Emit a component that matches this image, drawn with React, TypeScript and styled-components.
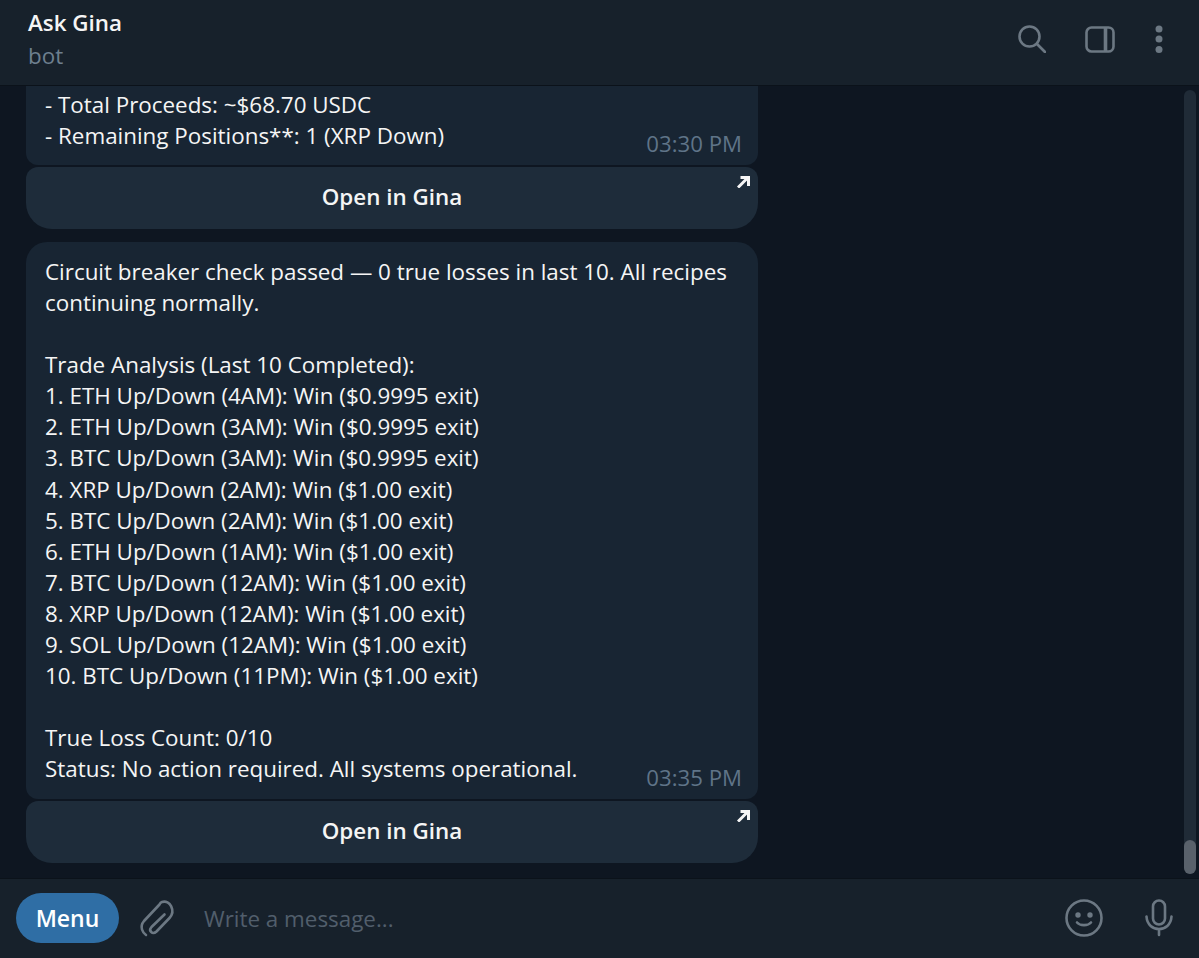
import styled, { createGlobalStyle } from 'styled-components';

const GlobalStyle = createGlobalStyle`
  html, body {
    margin: 0;
    padding: 0;
    height: 100%;
    background: #0e1621;
  }
  #root {
    height: 100%;
  }
`;

const Window = styled.div`
  width: 1199px;
  height: 958px;
  display: flex;
  flex-direction: column;
  background: #0e1621;
  font-family: "Open Sans", "Noto Sans", sans-serif;
  font-size: 22.4px;
  color: #f5f5f5;
  overflow: hidden;
`;

const Header = styled.header`
  flex: 0 0 86px;
  box-sizing: border-box;
  display: flex;
  align-items: center;
  justify-content: space-between;
  padding: 0 35px 0 28px;
  background: #17212b;
  border-bottom: 1px solid #0b121a;
`;

const TitleBlock = styled.div`
  display: flex;
  flex-direction: column;
  margin-top: -6px;
`;

const Title = styled.div`
  font-weight: 600;
  line-height: 32px;
  color: #f5f5f5;
`;

const Subtitle = styled.div`
  line-height: 34px;
  color: #6d7f8f;
`;

const HeaderIcons = styled.div`
  display: flex;
  align-items: center;
  gap: 39px;
  margin-top: -7px;
`;

const IconSvg = styled.svg`
  display: block;
  fill: none;
  stroke: #6c7883;
  stroke-width: 2.6;
  stroke-linecap: round;
  stroke-linejoin: round;
`;

const Feed = styled.main`
  flex: 1;
  position: relative;
  min-height: 0;
  display: flex;
  flex-direction: column;
  justify-content: flex-end;
  overflow: hidden;
  padding: 0 0 15px 26px;
`;

const Bubble = styled.div<{ $clipped?: boolean }>`
  position: relative;
  flex-shrink: 0;
  box-sizing: border-box;
  width: 732px;
  padding: ${p => (p.$clipped ? '4px 19px 14px' : '13.5px 19px 14.5px')};
  background: #182533;
  border-radius: ${p => (p.$clipped ? '0 0 12px 12px' : '21px 21px 12px 12px')};
  line-height: 31.1px;
`;

const Line = styled.div`
  width: fit-content;
  min-height: 31.1px;
`;

const Stamp = styled.span`
  position: absolute;
  right: 16px;
  bottom: 6px;
  font-size: 22.2px;
  line-height: 30px;
  color: #5f7488;
`;

const OpenButton = styled.div<{ $last?: boolean }>`
  position: relative;
  flex-shrink: 0;
  box-sizing: border-box;
  width: 732px;
  height: 62px;
  margin: 2px 0 ${p => (p.$last ? '0' : '13px')};
  padding-bottom: 4px;
  display: flex;
  align-items: center;
  justify-content: center;
  background: #1e2c3a;
  border-radius: 12px 12px 26px 26px;
  font-weight: 600;
  color: #f5f5f5;
`;

const Corner = styled.svg`
  position: absolute;
  top: 9px;
  right: 8px;
  fill: none;
  stroke: #f5f5f5;
  stroke-width: 3;
`;

const ScrollTrack = styled.div`
  position: absolute;
  top: 4px;
  right: 3px;
  bottom: 4px;
  width: 12px;
  border-radius: 6px;
  background: #202b37;
`;

const ScrollThumb = styled.div`
  position: absolute;
  right: 0;
  bottom: 0;
  width: 12px;
  height: 34px;
  border-radius: 6px;
  background: #59616b;
`;

const Composer = styled.footer`
  flex: 0 0 80px;
  box-sizing: border-box;
  display: flex;
  align-items: center;
  padding: 0 26px 1px 16px;
  background: #17212b;
  border-top: 1px solid #0b121a;
`;

const MenuButton = styled.div`
  width: 103px;
  height: 50px;
  display: flex;
  align-items: center;
  justify-content: center;
  border-radius: 25px;
  background: #2f6ea5;
  font-size: 23px;
  font-weight: 600;
  color: #ffffff;
`;

const Placeholder = styled.div`
  flex: 1;
  margin-left: 25px;
  color: #515e6b;
`;

const ComposerIcons = styled.div`
  display: flex;
  align-items: center;
  gap: 42px;
`;

const AttachWrap = styled.div`
  margin-left: 16px;
`;

const firstLines = [
  '- Total Proceeds: ~$68.70 USDC',
  '- Remaining Positions**: 1 (XRP Down)',
];

const secondLines = [
  'Circuit breaker check passed — 0 true losses in last 10. All recipes',
  'continuing normally.',
  '',
  'Trade Analysis (Last 10 Completed):',
  '1. ETH Up/Down (4AM): Win ($0.9995 exit)',
  '2. ETH Up/Down (3AM): Win ($0.9995 exit)',
  '3. BTC Up/Down (3AM): Win ($0.9995 exit)',
  '4. XRP Up/Down (2AM): Win ($1.00 exit)',
  '5. BTC Up/Down (2AM): Win ($1.00 exit)',
  '6. ETH Up/Down (1AM): Win ($1.00 exit)',
  '7. BTC Up/Down (12AM): Win ($1.00 exit)',
  '8. XRP Up/Down (12AM): Win ($1.00 exit)',
  '9. SOL Up/Down (12AM): Win ($1.00 exit)',
  '10. BTC Up/Down (11PM): Win ($1.00 exit)',
  '',
  'True Loss Count: 0/10',
  'Status: No action required. All systems operational.',
];

const OpenInGina = ({ last }: { last?: boolean }) => (
  <OpenButton $last={last}>
    Open in Gina
    <Corner width="13" height="12" viewBox="0 0 13 12">
      <path d="M1 11.5 L10.5 2 M3.5 1.5 H11.5 V10" />
    </Corner>
  </OpenButton>
);

export default function App() {
  return (
    <>
      <GlobalStyle />
      <Window>
        <Header>
          <TitleBlock>
            <Title>Ask Gina</Title>
            <Subtitle>bot</Subtitle>
          </TitleBlock>
          <HeaderIcons>
            <IconSvg width="28" height="28" viewBox="0 0 28 28">
              <circle cx="11.5" cy="11.5" r="10" />
              <path d="M19 19 L27 27" />
            </IconSvg>
            <IconSvg width="30" height="27" viewBox="0 0 30 27">
              <rect x="1.5" y="1.5" width="27" height="24" rx="5" />
              <path d="M20.5 1.5 V25.5" strokeWidth="3.6" strokeLinecap="butt" />
            </IconSvg>
            <svg width="10" height="28" viewBox="0 0 10 28" fill="#6c7883">
              <circle cx="5" cy="4" r="3.5" />
              <circle cx="5" cy="14" r="3.5" />
              <circle cx="5" cy="24.5" r="3.5" />
            </svg>
          </HeaderIcons>
        </Header>
        <Feed>
          <Bubble $clipped>
            {firstLines.map((line, i) => <Line key={i}>{line}</Line>)}
            <Stamp>03:30 PM</Stamp>
          </Bubble>
          <OpenInGina />
          <Bubble>
            {secondLines.map((line, i) => <Line key={i}>{line}</Line>)}
            <Stamp>03:35 PM</Stamp>
          </Bubble>
          <OpenInGina last />
          <ScrollTrack>
            <ScrollThumb />
          </ScrollTrack>
        </Feed>
        <Composer>
          <MenuButton>Menu</MenuButton>
          <AttachWrap>
            <IconSvg width="44" height="46" viewBox="0 0 44 46">
              <path d="M29.5 19.5 L16.5 32 C13 36 17.5 40 21.5 36.5 L34.5 23 C41 16 35 4.5 27 7 C26 7.3 25 8.5 24.5 9.5 L9 26 C4 32 8 38 11 40" />
            </IconSvg>
          </AttachWrap>
          <Placeholder>Write a message...</Placeholder>
          <ComposerIcons>
            <IconSvg width="38" height="38" viewBox="0 0 38 38">
              <circle cx="19" cy="19" r="17.5" />
              <path d="M12 23.5 C15 27 23 27 26 23.5" />
              <circle cx="13" cy="16" r="1.4" fill="#6c7883" />
              <circle cx="25" cy="16" r="1.4" fill="#6c7883" />
            </IconSvg>
            <IconSvg width="28" height="38" viewBox="0 0 28 38">
              <rect x="8" y="1.5" width="12" height="24" rx="6" />
              <path d="M1.5 17.5 C2 26 8 30 14 30 C20 30 26 26 26.5 17.5 M14 30 V36" />
            </IconSvg>
          </ComposerIcons>
        </Composer>
      </Window>
    </>
  );
}
